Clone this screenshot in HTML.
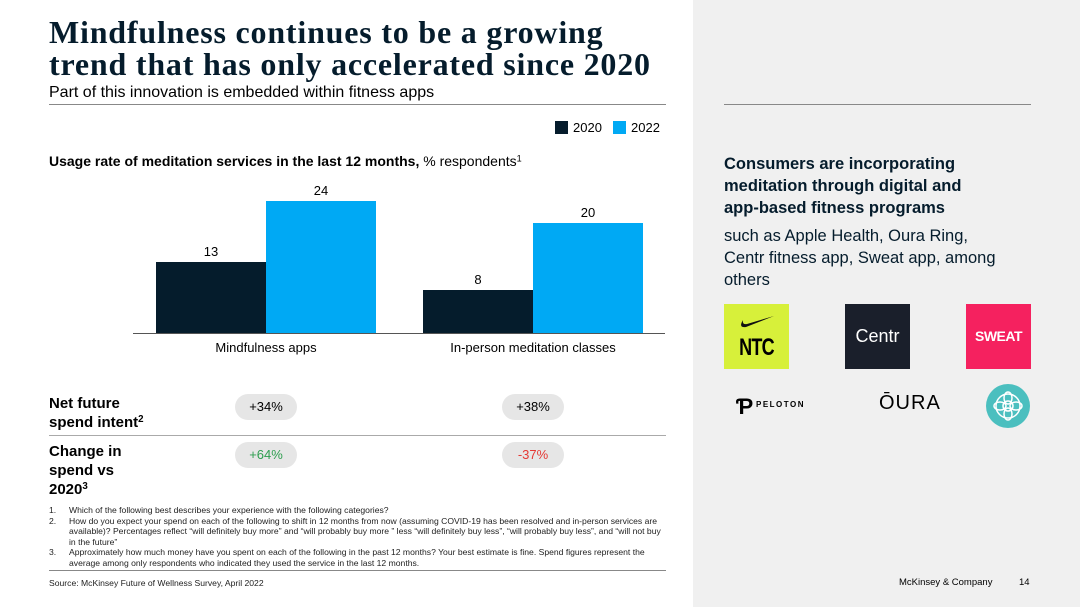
<!DOCTYPE html>
<html><head><meta charset="utf-8"><style>
*{margin:0;padding:0;box-sizing:border-box}
body{width:1080px;height:607px;position:relative;background:#fff;font-family:"Liberation Sans",sans-serif;color:#000;overflow:hidden}
.a{position:absolute}
.right{left:693px;top:0;width:387px;height:607px;background:#f0f0f0}
h1{position:absolute;left:49px;top:16px;font-family:"Liberation Serif",serif;font-weight:bold;font-size:32px;line-height:32px;color:#051c2c;letter-spacing:0.8px;white-space:nowrap}
.bar{position:absolute}
.d{background:#051c2c}.b{background:#00a9f4}
.lab{position:absolute;font-size:13px;text-align:center;width:110px}
.pill{position:absolute;width:62px;height:26px;border-radius:13px;background:#e6e6e6;font-size:13px;text-align:center;line-height:26px}
.fn{font-size:8.6px;line-height:10.5px;color:#222}
sup{font-size:0.65em;line-height:0;vertical-align:0.5em}
</style></head><body>
<div class="a right"></div>
<h1>Mindfulness continues to be a growing<br>trend that has only accelerated since 2020</h1>
<div class="a" style="left:49px;top:84px;font-size:16px">Part of this innovation is embedded within fitness apps</div>
<div class="a" style="left:49px;top:104px;width:617px;height:1px;background:#888"></div>
<div class="a" style="left:724px;top:104px;width:307px;height:1px;background:#888"></div>
<div class="a" style="left:555px;top:121px;width:13px;height:13px;background:#051c2c"></div>
<div class="a" style="left:573px;top:120px;font-size:13px">2020</div>
<div class="a" style="left:613px;top:121px;width:13px;height:13px;background:#00a9f4"></div>
<div class="a" style="left:631px;top:120px;font-size:13px">2022</div>
<div class="a" style="left:49px;top:153px;font-size:14px"><b>Usage rate of meditation services in the last 12 months,</b> % respondents<sup>1</sup></div>
<div class="bar d" style="left:156px;top:262px;width:110px;height:71px"></div>
<div class="bar b" style="left:266px;top:201px;width:110px;height:132px"></div>
<div class="bar d" style="left:423px;top:290px;width:110px;height:43px"></div>
<div class="bar b" style="left:533px;top:223px;width:110px;height:110px"></div>
<div class="lab" style="left:156px;top:244px">13</div>
<div class="lab" style="left:266px;top:183px">24</div>
<div class="lab" style="left:423px;top:272px">8</div>
<div class="lab" style="left:533px;top:205px">20</div>
<div class="a" style="left:133px;top:333px;width:532px;height:1px;background:#555"></div>
<div class="a" style="left:156px;top:340px;width:220px;text-align:center;font-size:13px">Mindfulness apps</div>
<div class="a" style="left:423px;top:340px;width:220px;text-align:center;font-size:13px">In-person meditation classes</div>
<div class="a" style="left:49px;top:394px;font-size:15px;font-weight:bold;line-height:19px">Net future<br>spend intent<sup>2</sup></div>
<div class="pill" style="left:235px;top:394px">+34%</div>
<div class="pill" style="left:502px;top:394px">+38%</div>
<div class="a" style="left:49px;top:435px;width:617px;height:1px;background:#aaa"></div>
<div class="a" style="left:49px;top:442px;font-size:15px;font-weight:bold;line-height:19px">Change in<br>spend vs<br>2020<sup>3</sup></div>
<div class="pill" style="left:235px;top:442px;color:#2e9e4f">+64%</div>
<div class="pill" style="left:502px;top:442px;color:#e53935">-37%</div>
<div class="a fn" style="left:49px;top:505px;width:617px">
<div style="display:flex"><span style="width:20px">1.</span><span>Which of the following best describes your experience with the following categories?</span></div>
<div style="display:flex"><span style="width:20px;flex:none">2.</span><span>How do you expect your spend on each of the following to shift in 12 months from now (assuming COVID-19 has been resolved and in-person services are available)? Percentages reflect “will definitely buy more” and “will probably buy more ” less “will definitely buy less”, “will probably buy less”, and “will not buy in the future”</span></div>
<div style="display:flex"><span style="width:20px;flex:none">3.</span><span>Approximately how much money have you spent on each of the following in the past 12 months? Your best estimate is fine. Spend figures represent the average among only respondents who indicated they used the service in the last 12 months.</span></div>
</div>
<div class="a" style="left:49px;top:570px;width:617px;height:1px;background:#888"></div>
<div class="a fn" style="left:49px;top:578px">Source: McKinsey Future of Wellness Survey, April 2022</div>
<div class="a" style="left:724px;top:153px;font-size:16.5px;font-weight:bold;line-height:22px;color:#051c2c">Consumers are incorporating<br>meditation through digital and<br>app-based fitness programs</div>
<div class="a" style="left:724px;top:225px;font-size:16.5px;line-height:22px;color:#051c2c">such as Apple Health, Oura Ring,<br>Centr fitness app, Sweat app, among<br>others</div>
<div class="a" style="left:724px;top:304px;width:65px;height:65px;background:#d7f03a;text-align:center">
<svg width="40" height="20" viewBox="0 0 40 20" style="margin-top:8px"><path d="M6 8 Q1 16 9 15 L37 4 L10 12 Q5 13 6 8Z" fill="#111"/></svg>
<div style="font-size:24px;font-weight:bold;margin-top:-3px;transform:scaleX(0.75);letter-spacing:-1px">NTC</div></div>
<div class="a" style="left:845px;top:304px;width:65px;height:65px;background:#1a1f2b;color:#fff;font-size:18px;line-height:65px;text-align:center">Centr</div>
<div class="a" style="left:966px;top:304px;width:65px;height:65px;background:#f5215f;color:#fff;font-size:14px;font-weight:bold;line-height:65px;text-align:center;letter-spacing:-0.5px">SWEAT</div>
<div class="a" style="left:736px;top:394px;font-size:22px;font-weight:bold">Ƥ</div>
<div class="a" style="left:756px;top:400px;font-size:8px;font-weight:bold;letter-spacing:1.5px">PELOTON</div>
<div class="a" style="left:879px;top:392px;font-size:20px;letter-spacing:1px">ŌURA</div>
<div class="a" style="left:986px;top:384px;width:44px;height:44px;border-radius:50%;background:#4bbfbf"><svg width="44" height="44" viewBox="0 0 44 44"><g fill="none" stroke="#fff" stroke-width="1.5"><circle cx="22" cy="22" r="12"/><circle cx="22" cy="22" r="5"/><ellipse cx="22" cy="14" rx="4" ry="6"/><ellipse cx="22" cy="30" rx="4" ry="6"/><ellipse cx="14" cy="22" rx="6" ry="4"/><ellipse cx="30" cy="22" rx="6" ry="4"/></g></svg></div>
<div class="a" style="left:899px;top:577px;font-size:9.5px">McKinsey &amp; Company</div>
<div class="a" style="left:1019px;top:577px;font-size:9.5px">14</div>
</body></html>
